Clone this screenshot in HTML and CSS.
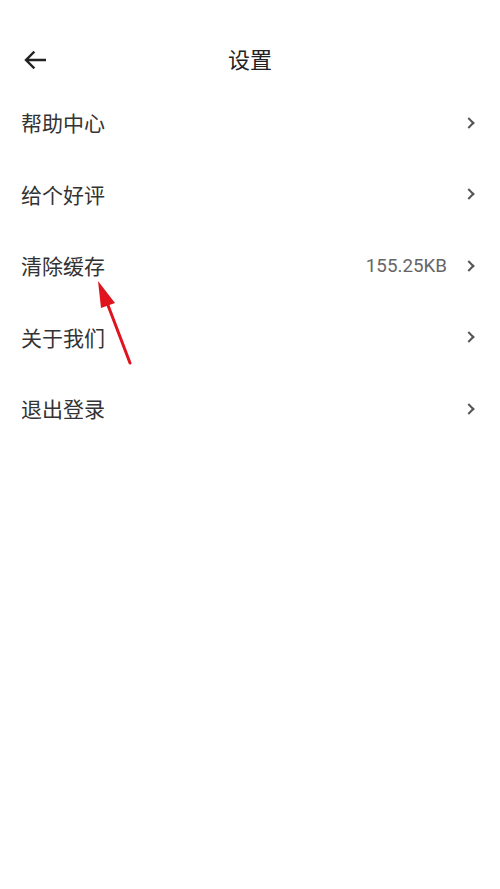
FILE: index.html
```html
<!DOCTYPE html>
<html lang="zh">
<head>
<meta charset="utf-8">
<title>设置</title>
<link rel="stylesheet" href="styles.css">
</head>
<body>
<div class="page">
  <header class="header">
    <span class="back">
      <svg width="22" height="18" viewBox="0 0 22 18"><path d="M21 9H2.5M9.5 1.5L2 9l7.5 7.5" fill="none" stroke="#222" stroke-width="2.4" stroke-linecap="square" stroke-linejoin="miter"/></svg>
    </span>
    <h1 class="title">设置</h1>
  </header>
  <ul class="list">
    <li class="row"><span class="label">帮助中心</span><span class="chev"></span></li>
    <li class="row"><span class="label">给个好评</span><span class="chev"></span></li>
    <li class="row"><span class="label">清除缓存</span><span class="value">155.25KB</span><span class="chev"></span></li>
    <li class="row"><span class="label">关于我们</span><span class="chev"></span></li>
    <li class="row"><span class="label">退出登录</span><span class="chev"></span></li>
  </ul>
  <svg class="annot" width="500" height="889" viewBox="0 0 500 889">
    <line x1="130" y1="363" x2="106" y2="300" stroke="#e0141e" stroke-width="3" stroke-linecap="round"/>
    <polygon points="98,281 115,303 101,308" fill="#e0141e"/>
  </svg>
</div>
</body>
</html>
```
FILE: styles.css
```css
html, body {
  margin: 0;
  padding: 0;
  background: #fff;
}
body {
  font-family: "Noto Sans CJK SC", "Noto Sans", sans-serif;
  color: #333;
}
.page {
  position: relative;
  width: 500px;
  height: 889px;
  overflow: hidden;
}
.header {
  position: relative;
  height: 54px;
  padding-top: 31px;
  padding-bottom: 2px;
  display: flex;
  align-items: center;
  justify-content: center;
}
.back {
  position: absolute;
  left: 24px;
  top: 51px;
  width: 22px;
  height: 18px;
  display: flex;
}
.title {
  margin: 0;
  font-size: 22px;
  font-weight: 400;
  color: #222;
  line-height: 1;
}
.list {
  list-style: none;
  margin: 0;
  padding: 0;
}
.row {
  height: 71.5px;
  display: flex;
  align-items: center;
  padding: 0 25px 0 21px;
}
.label {
  flex: 1;
  font-size: 21px;
  line-height: 1;
  color: #333;
}
.value {
  font-family: Roboto, "Noto Sans", sans-serif;
  font-size: 18.8px;
  color: #666;
  margin-right: 18px;
}
.chev {
  width: 6px;
  height: 6px;
  border-right: 2px solid #555;
  border-top: 2px solid #555;
  transform: rotate(45deg);
  margin-right: 2px;
}
.annot {
  position: absolute;
  left: 0;
  top: 0;
  pointer-events: none;
}
```
